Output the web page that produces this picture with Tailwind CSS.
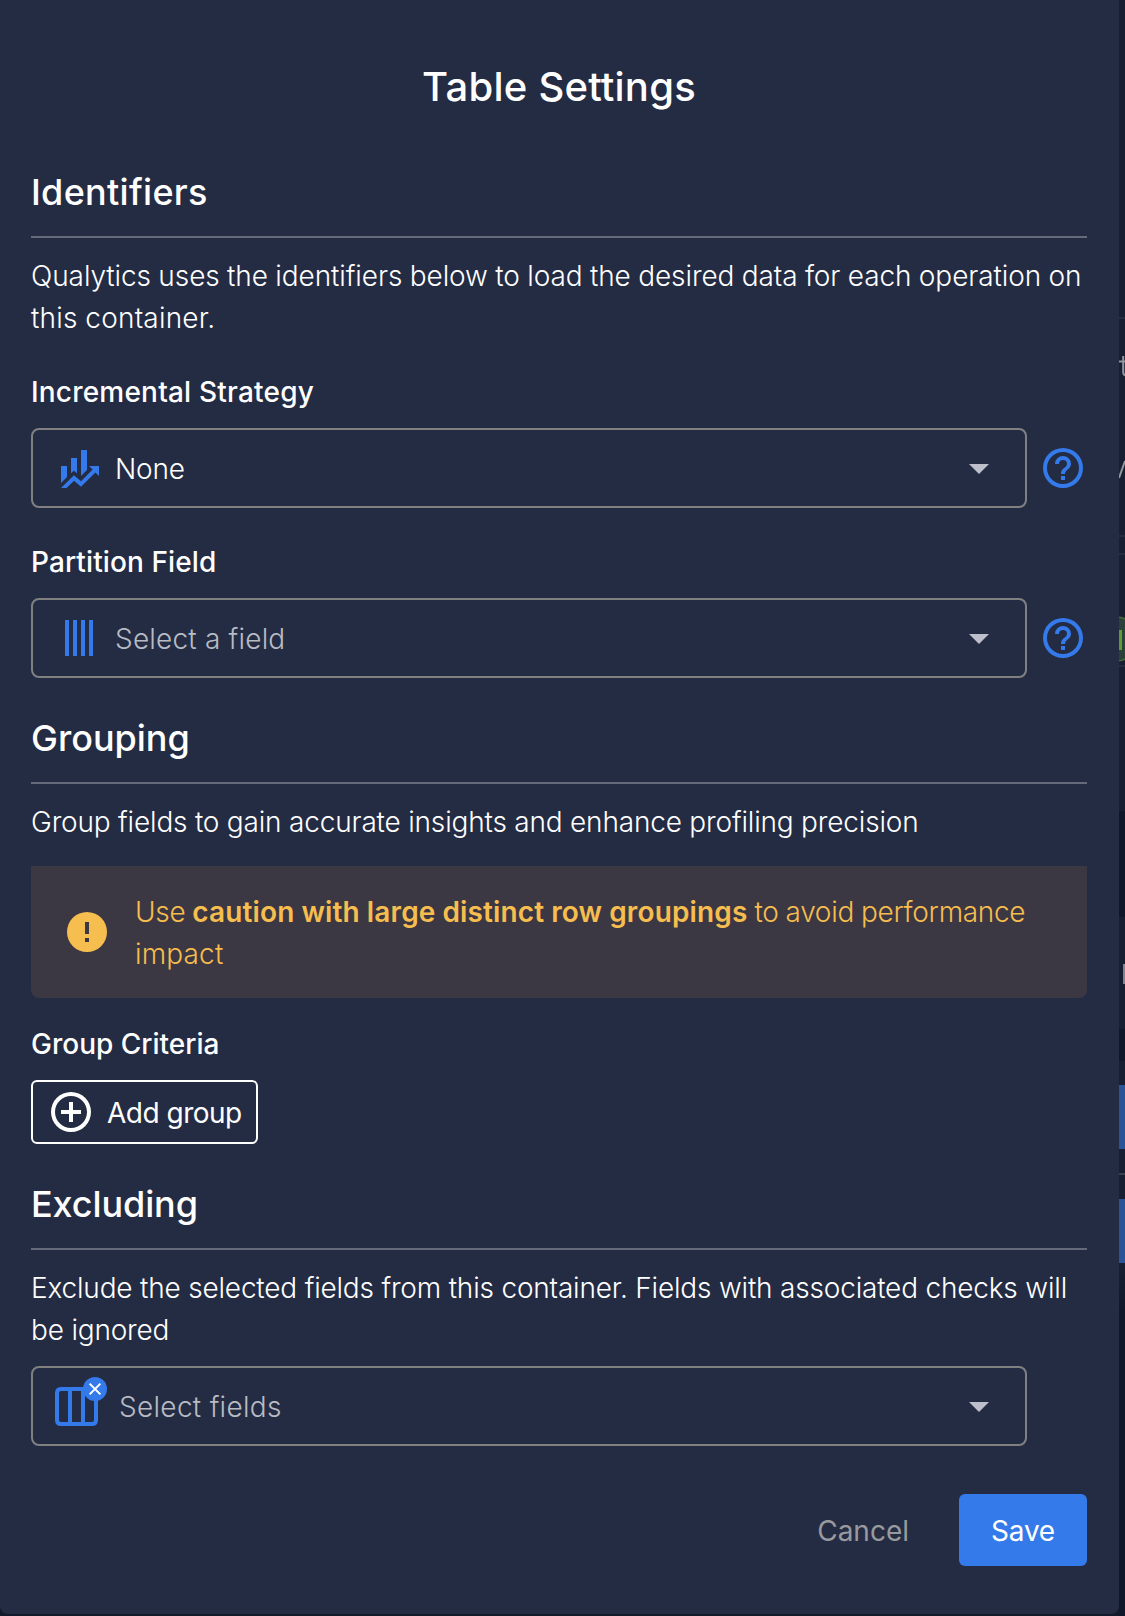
<!DOCTYPE html>
<html lang="en">
<head>
<meta charset="utf-8">
<title>Table Settings</title>
<script src="https://cdn.jsdelivr.net/npm/@tailwindcss/browser@4"></script>
</head>
<body class="w-[1125px] h-[1616px] overflow-hidden relative bg-[#131a2c] font-['Inter',sans-serif] text-white text-[28px] leading-[42px]">

<!-- page behind the dialog -->
<div class="absolute top-0 right-0 w-[6px] h-[1616px] overflow-hidden flex flex-col" aria-hidden="true">
  <div class="h-[317px] shrink-0 bg-[#172033]"></div>
  <div class="h-[2px] shrink-0 bg-[#252c3f]"></div>
  <div class="h-[216px] shrink-0 bg-[#172033]"></div>
  <div class="h-[2px] shrink-0 bg-[#252c3f]"></div>
  <div class="h-[16px] shrink-0 bg-[#172033]"></div>
  <div class="h-[2px] shrink-0 bg-[#252c3f]"></div>
  <div class="h-[110px] shrink-0 bg-[#172033]"></div>
  <div class="h-[2px] shrink-0 bg-[#252c3f]"></div>
  <div class="h-[144px] shrink-0 bg-[#172033]"></div>
  <div class="h-[106px] shrink-0 bg-[#10172a]"></div>
  <div class="h-[112px] shrink-0 bg-[#172033]"></div>
  <div class="h-[32px] shrink-0 bg-[#10172a]"></div>
  <div class="h-[24px] shrink-0 bg-[#172033]"></div>
  <div class="h-[64px] shrink-0 bg-[#2a5497]"></div>
  <div class="h-[24px] shrink-0 bg-[#172033]"></div>
  <div class="h-[2px] shrink-0 bg-[#3a4252]"></div>
  <div class="h-[24px] shrink-0 bg-[#172033]"></div>
  <div class="h-[64px] shrink-0 bg-[#2a5497]"></div>
  <div class="h-[50px] shrink-0 bg-linear-to-b from-[#172033] to-[#10172a]"></div>
  <div class="grow bg-[#10172a]"></div>
  <svg class="absolute inset-0" width="6" height="1616" viewBox="0 0 6 1616" fill="none">
    <path d="M4.2 356V372Q4.2 375 7 375.5M0 361.5H6" stroke="#94979c" stroke-width="2"/>
    <path d="M6 461L0 478" stroke="#94979c" stroke-width="2"/>
    <circle cx="-3" cy="639" r="22" fill="#2c4238" stroke="#406b38" stroke-width="1.5"/>
    <path d="M1.5 630V650" stroke="#5f9a35" stroke-width="3"/>
    <path d="M5 964V984" stroke="#80848c" stroke-width="2"/>
  </svg>
</div>

<main class="relative w-[1119px] h-[1614px] rounded-b-lg bg-[#242c44] pt-[57px] pl-[31px] pr-8 flex flex-col">
  <h1 class="text-center text-[40px] leading-[60px] font-medium tracking-[0.25px]">Table Se<span class="tracking-[-1.2px]">t</span>tings</h1>

  <section class="mt-12">
    <h2 class="text-[36px] leading-[54px] font-medium tracking-[0.3px] pb-[17px] border-b-2 border-[#666b7c]">Identifiers</h2>
    <p class="mt-[17px] font-light whitespace-nowrap tracking-[-0.08px] [word-spacing:-0.4px]">Qualytics uses the identifiers below to load the desired data for each operation on<br><span class="tracking-[0.2px]">this container.</span></p>

    <h3 class="mt-8 font-medium tracking-[0.2px]">Incremental Strategy</h3>
    <div class="mt-[15px] flex items-center gap-3">
      <div class="w-[996px] h-20 border-2 border-[#808080] rounded-lg flex items-center pl-[22px] pr-[22px]">
        <svg class="size-12 shrink-0" viewBox="0 0 24 24" fill="#347aeb"><path d="M6,16.5L3,19.44V11H6M11,14.66L9.43,13.32L8,14.64V7H11M16,13L13,16V3H16M18.81,12.81L17,11H22V16L20.21,14.21L13,21.36L9.53,18.34L5.75,22H3L9.47,15.66L13,18.64"/></svg>
        <span class="ml-3 mt-0.5 font-light tracking-[-0.2px] grow">None</span>
        <svg class="size-12 shrink-0" viewBox="0 0 24 24" fill="#bdc0ca"><path d="M7,10L12,15L17,10H7Z"/></svg>
      </div>
      <svg class="size-12 shrink-0" viewBox="0 0 24 24" fill="#347aeb"><path d="M11,18H13V16H11V18M12,2A10,10 0 0,0 2,12A10,10 0 0,0 12,22A10,10 0 0,0 22,12A10,10 0 0,0 12,2M12,20C7.59,20 4,16.41 4,12C4,7.59 7.59,4 12,4C16.41,4 20,7.59 20,12C20,16.41 16.41,20 12,20M12,6A4,4 0 0,0 8,10H10A2,2 0 0,1 12,8A2,2 0 0,1 14,10C14,12 11,11.75 11,15H13C13,12.75 16,12.5 16,10A4,4 0 0,0 12,6Z"/></svg>
    </div>

    <h3 class="mt-[33px] font-medium tracking-[0.1px]">Partition Field</h3>
    <div class="mt-[15px] flex items-center gap-3">
      <div class="w-[996px] h-20 border-2 border-[#808080] rounded-lg flex items-center pl-[22px] pr-[22px]">
        <svg class="size-12 shrink-0" viewBox="0 0 24 24" fill="#347aeb"><path d="M5,3H7V21H5M9,3H11V21H9M13,3H15V21H13M17,3H19V21H17"/></svg>
        <span class="ml-3 mt-0.5 font-light tracking-[0.2px] text-[#b8bbc3] grow">Select a field</span>
        <svg class="size-12 shrink-0" viewBox="0 0 24 24" fill="#bdc0ca"><path d="M7,10L12,15L17,10H7Z"/></svg>
      </div>
      <svg class="size-12 shrink-0" viewBox="0 0 24 24" fill="#347aeb"><path d="M11,18H13V16H11V18M12,2A10,10 0 0,0 2,12A10,10 0 0,0 12,22A10,10 0 0,0 22,12A10,10 0 0,0 12,2M12,20C7.59,20 4,16.41 4,12C4,7.59 7.59,4 12,4C16.41,4 20,7.59 20,12C20,16.41 16.41,20 12,20M12,6A4,4 0 0,0 8,10H10A2,2 0 0,1 12,8A2,2 0 0,1 14,10C14,12 11,11.75 11,15H13C13,12.75 16,12.5 16,10A4,4 0 0,0 12,6Z"/></svg>
    </div>
  </section>

  <section class="mt-[33px]">
    <h2 class="text-[36px] leading-[54px] font-medium pb-[17px] border-b-2 border-[#666b7c]">Grouping</h2>
    <p class="mt-[17px] font-light whitespace-nowrap tracking-[-0.16px] [word-spacing:-0.2px]">Group fields to gain accurate insights and enhance profiling precision</p>
    <div class="mt-[23px] h-[132px] bg-[#3c3843] rounded-b-lg flex items-center pl-8 text-[#f6bd4f]">
      <svg class="size-12 shrink-0" viewBox="0 0 24 24" fill="currentColor"><path d="M13,13H11V7H13M13,17H11V15H13M12,2A10,10 0 0,0 2,12A10,10 0 0,0 12,22A10,10 0 0,0 22,12A10,10 0 0,0 12,2Z"/></svg>
      <p class="ml-6 mt-0.5 font-light whitespace-nowrap tracking-[-0.3px] [word-spacing:-0.6px]">Use <span class="font-semibold tracking-[0.13px] [word-spacing:-0.2px]">caution with large distinct row groupings</span> to avoid performance<br><span class="tracking-[0.15px]">impact</span></p>
    </div>
    <h3 class="mt-[25px] font-medium">Group Criteria</h3>
    <button class="mt-[15px] w-[227px] h-16 border-2 border-white rounded-md flex items-center pl-[14px]">
      <svg class="size-12 shrink-0" viewBox="0 0 24 24" fill="currentColor"><path d="M12,20C7.59,20 4,16.41 4,12C4,7.59 7.59,4 12,4C16.41,4 20,7.59 20,12C20,16.41 16.41,20 12,20M12,2A10,10 0 0,0 2,12A10,10 0 0,0 12,22A10,10 0 0,0 22,12A10,10 0 0,0 12,2M13,7H11V11H7V13H11V17H13V13H17V11H13V7Z"/></svg>
      <span class="ml-3 mt-0.5 font-normal tracking-[-0.5px]">Add group</span>
    </button>
  </section>

  <section class="mt-[33px]">
    <h2 class="text-[36px] leading-[54px] font-medium tracking-[-0.1px] pb-[17px] border-b-2 border-[#666b7c]">Excluding</h2>
    <p class="mt-[17px] font-light whitespace-nowrap tracking-[-0.19px]">Exclude the selected fields from this container. Fields with associated checks will<br>be ignored</p>
    <div class="mt-[15px] w-[996px] h-20 border-2 border-[#808080] rounded-lg flex items-center pl-[22px] pr-[22px]">
      <svg class="w-[52px] h-[50px] -mt-2 shrink-0" viewBox="0 0 52 50" fill="none">
        <path d="M6 12H37Q41 12 41 16V43Q41 47 37 47H6Q2 47 2 43V16Q2 12 6 12ZM15 12V47M28 12V47" stroke="#347aeb" stroke-width="4"/>
        <circle cx="40" cy="12" r="12" fill="#347aeb"/>
        <path d="M34.6 6.6L45.4 17.4M45.4 6.6L34.6 17.4" stroke="#fff" stroke-width="2"/>
      </svg>
      <span class="ml-3 mt-0.5 font-light tracking-[0.3px] text-[#b8bbc3] grow">Select fields</span>
      <svg class="size-12 shrink-0" viewBox="0 0 24 24" fill="#bdc0ca"><path d="M7,10L12,15L17,10H7Z"/></svg>
    </div>
  </section>

  <div class="mt-12 flex justify-end items-center">
    <button class="h-[72px] px-5 mr-[30px] pt-0.5 text-[#999a9e]">Cancel</button>
    <button class="h-[72px] w-32 pt-0.5 rounded-md bg-[#347aeb] tracking-[-0.2px]">Save</button>
  </div>
</main>
</body>
</html>
